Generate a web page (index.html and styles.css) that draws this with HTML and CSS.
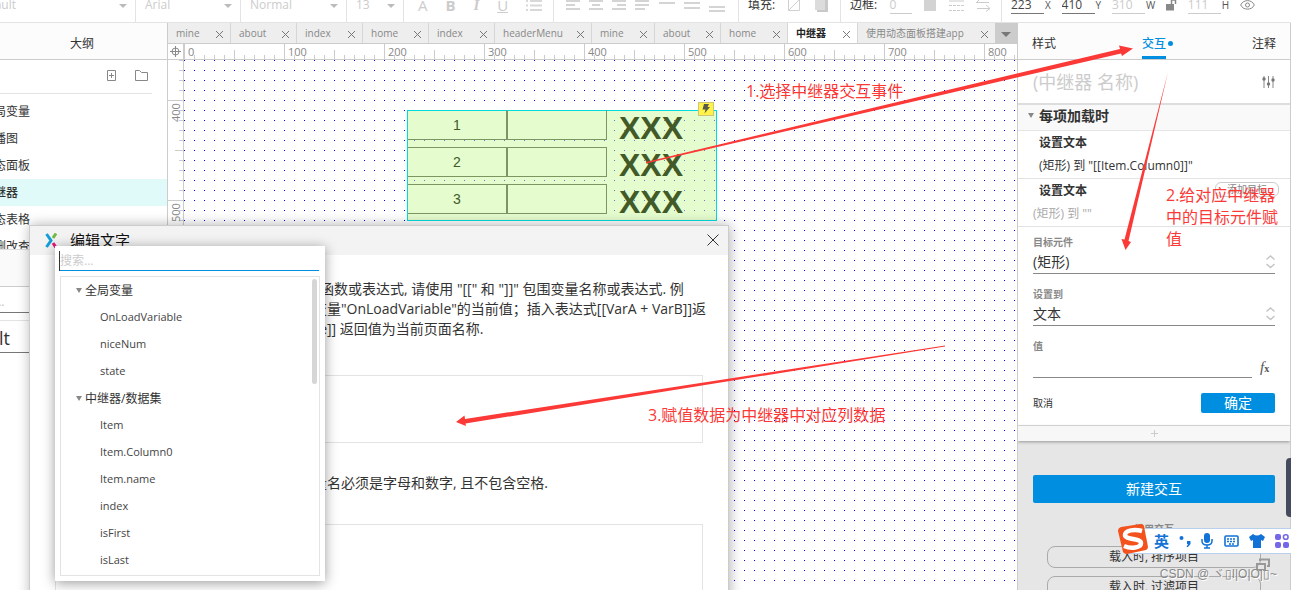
FILE: index.html
```html
<!DOCTYPE html>
<html lang="zh-CN">
<head>
<meta charset="utf-8">
<title>中继器</title>
<link rel="stylesheet" href="styles.css">
</head>
<body>
<div class="app">
  <header class="toolbar">
    <div class="group g-style"><span class="cut cut-style">Default</span><i class="caret"></i></div>
    <div class="group g-font"><span>Arial</span><i class="caret"></i></div>
    <div class="group g-weight"><span>Normal</span><i class="caret"></i></div>
    <div class="group g-size"><span>13</span><i class="caret"></i></div>
    <div class="group g-format">
      <span class="glyph">A</span><b class="glyph">B</b><i class="glyph serif">I</i><u class="glyph">U</u>
      <svg width="17" height="12" viewBox="0 0 17 12"><path d="M0 1h2M0 5.500h2M0 10h2M4 1h12M4 5.500h12M4 10h12" stroke="#d8d8d8" stroke-width="2"/></svg>
    </div>
    <div class="group g-align">
      <svg width="14" height="12"><path d="M0 1h14M0 5h9M0 9h14" stroke="#d4d4d4" stroke-width="2"/></svg>
      <svg width="14" height="12"><path d="M0 1h14M3 5h8M0 9h14" stroke="#d4d4d4" stroke-width="2"/></svg>
      <svg width="14" height="12"><path d="M0 1h14M5 5h9M0 9h14" stroke="#d4d4d4" stroke-width="2"/></svg>
      <svg width="14" height="12"><path d="M0 1h14M0 5h14M0 9h10" stroke="#d4d4d4" stroke-width="2"/></svg>
      <svg width="16" height="12"><path d="M0 3h16" stroke="#d4d4d4" stroke-width="2"/></svg>
      <svg width="16" height="12"><path d="M0 3h16M0 8h16" stroke="#d4d4d4" stroke-width="2"/></svg>
      <svg width="16" height="12"><path d="M0 7h16M0 11h16" stroke="#d4d4d4" stroke-width="2"/></svg>
    </div>
    <div class="group g-fill">
      <span class="dark">填充:</span>
      <svg width="13" height="12"><path d="M.5 0v10.500h11V0M1 10L11 0" fill="none" stroke="#d0d0d0"/></svg>
      <svg width="14" height="12"><path d="M3 0h11v12H3z" fill="#c9c9c9"/><path d="M1 0h10v10H1z" fill="#dcdcdc"/></svg>
    </div>
    <div class="group g-border">
      <span class="dark">边框:</span><span class="field">0</span>
      <svg width="12" height="12"><path d="M0 0h12v11H0z" fill="#d3d3d3"/></svg>
      <svg width="15" height="12"><path d="M0 1h15" stroke="#ccc"/><path d="M0 5.500h15M0 10.500h15" stroke="#ccc" stroke-dasharray="3 1"/></svg>
      <svg width="14" height="12"><path d="M0 2.500h13M4 -1L.5 2.500M1 8.500h13M10 5l4 3.500-4 3" stroke="#ccc" fill="none"/></svg>
    </div>
    <div class="group g-place">
      <label class="dim"><input class="field on" value="223">X</label>
      <label class="dim"><input class="field on" value="410">Y</label>
      <label class="dim"><input class="field" value="310">W</label>
      <svg width="11" height="12"><path d="M0 4h8v6.500H0z" fill="#888"/><path d="M5.500 5V0h4v4" fill="none" stroke="#888" stroke-width="1.500"/></svg>
      <label class="dim"><input class="field" value="111">H</label>
      <svg width="15" height="11" viewBox="0 0 15 11"><path d="M.7 5C3-.8 12-.8 14.300 5 12 10.500 3 10.500.7 5z" fill="none" stroke="#888"/><circle cx="7.500" cy="5" r="2" fill="none" stroke="#888"/></svg>
    </div>
  </header>

  <div class="main">
    <aside class="left">
      <h2 class="panel-title">大纲</h2>
      <div class="outline-tools">
        <svg width="10" height="12"><path d="M.5.5h8v10h-8zM4.500 3v5M2 5.500h5" fill="none" stroke="#888"/></svg>
        <svg width="14" height="12"><path d="M.5.5h4l2 2h6v8H.5z" fill="none" stroke="#888"/></svg>
      </div>
      <ul class="pages">
        <li>全局变量</li><li>轮播图</li><li>动态面板</li><li class="selected">中继器</li><li>动态表格</li><li>增删改查</li>
      </ul>
      <div class="masters"></div>
      <div class="lib-search">...</div>
      <div class="lib-name"><span class="cut cut-lib">Default</span></div>
    </aside>

    <section class="center">
      <nav class="tabs">
        <div class="tab">mine<button class="x" aria-label="关闭"></button></div>
        <div class="tab">about<button class="x" aria-label="关闭"></button></div>
        <div class="tab">index<button class="x" aria-label="关闭"></button></div>
        <div class="tab">home<button class="x" aria-label="关闭"></button></div>
        <div class="tab">index<button class="x" aria-label="关闭"></button></div>
        <div class="tab">headerMenu<button class="x" aria-label="关闭"></button></div>
        <div class="tab">mine<button class="x" aria-label="关闭"></button></div>
        <div class="tab">about<button class="x" aria-label="关闭"></button></div>
        <div class="tab">home<button class="x" aria-label="关闭"></button></div>
        <div class="tab active">中继器<button class="x" aria-label="关闭"></button></div>
        <div class="tab last">使用动态面板搭建app<button class="x" aria-label="关闭"></button></div>
        <button class="tab-menu" aria-label="所有页面"><i class="caret"></i></button>
      </nav>
      <div class="workspace">
        <div class="corner"><svg width="11" height="11"><circle cx="5.500" cy="5.500" r="3.500" fill="none" stroke="#888"/><path d="M5.500 0v11M0 5.500h11" stroke="#888"/></svg></div>
        <div class="ruler-h"><span>0</span><span>100</span><span>200</span><span>300</span><span>400</span><span>500</span><span>600</span><span>700</span><span>800</span></div>
        <div class="ruler-v"><span>400</span><span>500</span></div>
        <div class="canvas">
          <div class="repeater">
            <div class="row"><span class="cell">1</span><span class="cell"></span><b class="big">XXX</b></div>
            <div class="row"><span class="cell">2</span><span class="cell"></span><b class="big">XXX</b></div>
            <div class="row"><span class="cell">3</span><span class="cell"></span><b class="big">XXX</b></div>
            <div class="bolt"><svg width="8" height="10"><path d="M2 0h5L5.500 3H8L2.500 9.500 3.500 5.500H.5z" fill="#5a5a4a"/></svg></div>
          </div>
        </div>
      </div>
    </section>

    <aside class="right">
      <nav class="modes"><a href="#">样式</a><a href="#" class="current">交互</a><a href="#">注释</a></nav>
      <div class="name-row">
        <input class="name" aria-label="名称" placeholder="(中继器 名称)">
        <svg width="13" height="13"><path d="M2 1v12M6.500 1v12M11 1v12" stroke="#888"/><circle cx="2" cy="4" r="1.700" fill="#777"/><circle cx="6.500" cy="9" r="1.700" fill="#777"/><circle cx="11" cy="5" r="1.700" fill="#777"/></svg>
      </div>
      <h3 class="event"><i class="tri"></i>每项加载时</h3>
      <div class="action"><b>设置文本</b><span>(矩形) 到 "[[Item.Column0]]"</span></div>
      <div class="action pending"><b>设置文本</b><button class="add-target">添加目标</button><span>(矩形) 到 ""</span></div>
      <form class="form">
        <label for="target">目标元件</label>
        <div class="pick"><select id="target"><option>(矩形)</option></select><svg width="9" height="14"><path d="M.5 4.500L4.500 1l4 3.500M.5 9l4 3.500L8.500 9" fill="none" stroke="#c4c4c4" stroke-width="1.400"/></svg></div>
        <label for="setto">设置到</label>
        <div class="pick"><select id="setto"><option>文本</option></select><svg width="9" height="14"><path d="M.5 4.500L4.500 1l4 3.500M.5 9l4 3.500L8.500 9" fill="none" stroke="#c4c4c4" stroke-width="1.400"/></svg></div>
        <label for="val">值</label>
        <div class="value"><input id="val"><button type="button" class="fx"><i>f</i><small>x</small></button></div>
        <div class="confirm"><a href="#">取消</a><button type="button" class="primary ok">确定</button></div>
      </form>
      <button class="more" aria-label="添加"><svg width="9" height="9"><path d="M4.500 1v7M1 4.500h7" stroke="#ccc"/></svg></button>
      <div class="bottom">
        <button class="primary new">新建交互</button>
        <p class="common">常用交互</p>
        <button class="pill">载入时, 排序项目</button>
        <button class="pill">载入时, 过滤项目</button>
      </div>
    </aside>
  </div>

  <section class="dialog">
    <header class="dialog-bar">
      <svg width="13" height="15" viewBox="0 0 13 15"><path d="M1.500 1L6 7.500 1.500 14" fill="none" stroke="#159fd8" stroke-width="3"/><path d="M8 5l3-4.500" stroke="#74b943" stroke-width="3"/><path d="M8 10l3 4.500" stroke="#e5177b" stroke-width="3"/></svg>
      <h2>编辑文字</h2>
      <button class="close" aria-label="关闭"><svg width="12" height="12"><path d="M.5.5l11 11M11.500.5l-11 11" stroke="#333"/></svg></button>
    </header>
    <div class="dialog-body">
      <p class="help">
        <span class="line"><span class="lead l1">在下方编辑文本, 要插入变量、</span>函数或表达式, 请使用 "[[" 和 "]]" 包围变量名称或表达式. 例</span>
        <span class="line"><span class="lead l2">如：插入</span>变量"OnLoadVariable"的当前值；插入表达式[[VarA + VarB]]返</span>
        <span class="line"><span class="lead l3">插入 [[PageName</span>]] 返回值为当前页面名称.</span>
      </p>
      <textarea class="editor" aria-label="文本"></textarea>
      <p class="note"><span class="line"><span class="lead l3">局部变量</span>名必须是字母和数字, 且不包含空格.</span></p>
      <div class="locals"></div>
    </div>
    <div class="popup">
      <input class="search" aria-label="搜索" placeholder="搜索...">
      <div class="vars">
        <ul>
          <li class="cat"><i class="tri"></i>全局变量</li>
          <li>OnLoadVariable</li><li>niceNum</li><li>state</li>
          <li class="cat"><i class="tri"></i>中继器/数据集</li>
          <li>Item</li><li>Item.Column0</li><li>Item.name</li><li>index</li><li>isFirst</li><li>isLast</li>
        </ul>
        <i class="thumb"></i>
      </div>
    </div>
  </section>

  <div class="note-text n1">1.选择中继器交互事件</div>
  <div class="note-text n2">2.给对应中继器中的目标元件赋值</div>
  <div class="note-text n3">3.赋值数据为中继器中对应列数据</div>
  <svg class="arrows" width="1291" height="590" fill="#fb3a38">
    <path d="M646 162L1120 49 1119 45.500 1133 48.500 1122 56 1121 53.500 646 163.500z"/>
    <path d="M1168 72L1124.500 239.500 1121.500 239 1125.500 250 1131 242 1128.500 241z"/>
    <path d="M945 345.500L465 419 464.500 415.500 456 422 466 426 465.500 423.500 945 346.500z"/>
  </svg>

  <div class="dock"></div>
  <div class="ime">
    <svg class="sogou" width="32" height="32" viewBox="0 0 32 32"><path d="M4 4L24 1q2 0 3 2l4 21q0 2-2 3L10 31q-3 0-4-2L1 8q0-3 3-4z" fill="#f4521c"/><path d="M25 8C18 6 8 7 8 12s16 3 16 8-10 6-17 3" fill="none" stroke="#fff" stroke-width="4.500"/></svg>
    <b>英</b>
    <svg width="12" height="14"><circle cx="2.500" cy="4" r="2" fill="#1272d6"/><path d="M8 7h3.500v3L9 13H7.500L9 10H8z" fill="#1272d6"/></svg>
    <svg width="12" height="16"><rect x="3" y="0" width="6" height="10" rx="3" fill="#1272d6"/><path d="M1 6v2q0 4 5 4t5-4V6M6 12v3M3 15h6" fill="none" stroke="#1272d6" stroke-width="1.500"/></svg>
    <svg width="15" height="12"><rect x="1" y="1" width="13" height="10" rx="1" fill="none" stroke="#1272d6" stroke-width="1.600"/><path d="M3 4h9M3 6.500h9M5 9h5" stroke="#1272d6" stroke-width="1.500" stroke-dasharray="2 1"/></svg>
    <svg width="16" height="14"><path d="M0 3l4-3q4 3 8 0l4 3-2 4-2-1v8H4V6L2 7z" fill="#1272d6"/></svg>
    <svg width="14" height="14"><rect width="6" height="6" rx="2" fill="#7467e8"/><rect x="8.500" y=".8" width="4.500" height="4.500" rx="2" fill="none" stroke="#7467e8" stroke-width="1.600"/><rect y="8" width="6" height="6" rx="2" fill="#7467e8"/><rect x="8" y="8" width="6" height="6" rx="2" fill="#7467e8"/></svg>
  </div>
  <svg class="restore" width="14" height="13"><path d="M1 6h8v6H1zM4 3V1.500h9V8h-2" fill="none" stroke="#999" stroke-width="2"/></svg>
  <div class="watermark">CSDN @ ヾ▯I|O|O|▯~</div>
</div>
</body>
</html>
```

FILE: styles.css
```css
* { box-sizing: border-box; }
body { margin: 0; background: #fff; color: #333; font: 12px/16px "Open Sans", "Noto Sans CJK SC", sans-serif; }
button, input, select, textarea { font: inherit; color: inherit; margin: 0; padding: 0; border: 0; background: none; outline: 0; }
ul, h2, h3, p { margin: 0; padding: 0; list-style: none; font-weight: normal; }
a { color: inherit; text-decoration: none; }
svg { flex: none; display: block; }
.app { position: relative; height: 100vh; overflow: hidden; display: flex; flex-direction: column; }

.toolbar { display: flex; flex: none; height: 23px; border-bottom: 1px solid #e3e3e3; color: #ccc; line-height: 10px; white-space: nowrap; }
.group { display: flex; flex: none; border-right: 1px solid #e3e3e3; align-items: flex-start; justify-content: space-between; padding: 0 8px 0 9px; }
.caret { border: 4px solid transparent; border-top-color: #bbb; border-bottom: 0; margin-top: 4px; }
.cut { display: flex; justify-content: flex-end; overflow: hidden; }
.cut-style { width: 16px; height: 14px; }
.g-style { width: 136px; padding-left: 0; }
.g-font { width: 105px; }
.g-weight { width: 106px; }
.g-size { width: 57px; }
.g-format { width: 150px; padding: 0 10px 0 14px; }
.glyph { font-size: 15px; }
.serif { font-family: "Liberation Serif", serif; font-weight: bold; }
.g-align { width: 185px; padding: 0 13px 0 12px; }
.g-fill { width: 102px; padding: 0 12px 0 9px; }
.g-border { width: 161px; padding: 0 11px 0 9px; }
.dark { color: #333; }
.g-place { flex: 1; border: 0; padding: 0 36px 0 9px; }
.dim { display: flex; gap: 1px; color: #555; font-size: 10px; }
.dim .field { font-size: 12px; }
.field { width: 33px; height: 14px; line-height: 10px; padding-bottom: 4px; border-bottom: 1px solid #ccc; color: #ccc; }
.g-border .field { width: 22px; }
.field.on { color: #444; border-color: #777; }

.main { flex: 1; min-height: 0; display: grid; grid-template-columns: 167px minmax(0, 1fr) 274px; }
.left { display: flex; flex-direction: column; min-height: 0; overflow: hidden; }
.panel-title { flex: none; height: 37px; background: #fcfcfc; border-bottom: 1px solid #ccc; text-align: center; font-size: 12px; line-height: 41px; padding-right: 3px; }
.outline-tools { flex: none; display: flex; justify-content: flex-end; align-items: center; gap: 18px; height: 34px; margin-right: 15px; padding: 0 3px 2px 0; border-bottom: 1px solid #e3e3e3; }
.pages { flex: none; height: 155px; padding-top: 4px; overflow: hidden; white-space: nowrap; }
.pages li { height: 27px; line-height: 27px; text-indent: -18px; }
.pages .selected { background: #e0fafa; font-weight: 500; }
.masters { flex: none; height: 38px; background: #fafafa; border-top: 1px solid #ddd; border-bottom: 1px solid #ccc; }
.lib-search { flex: none; height: 26px; border-bottom: 1px solid #777; color: #bbb; line-height: 30px; text-indent: -5px; }
.lib-name { flex: none; margin-top: 7px; height: 33px; border-top: 1px solid #e3e3e3; border-bottom: 1px solid #777; font-size: 18px; line-height: 34px; }
.cut-lib { width: 10px; }

.center { display: flex; flex-direction: column; min-width: 0; border-left: 1px solid #ccc; }
.tabs { flex: none; display: grid; height: 21px; grid-template-columns: 63px 66px 66px 66px 66px 97px 63px 66px 67px 70px 1fr 22px; background: #eee; border-bottom: 1px solid #ccc; color: #888; font-size: 10px; line-height: 19px; white-space: nowrap; }
.tab { display: flex; align-items: center; justify-content: space-between; padding: 0 7px 0 8px; border-right: 1px solid #d6d6d6; }
.tab.active { background: #fff; color: #222; font-weight: bold; }
.tab.last { border: 0; }
.x { width: 7px; height: 7px; margin-top: 2px; background: linear-gradient(45deg, transparent 45%, #777 45% 55%, transparent 55%), linear-gradient(-45deg, transparent 45%, #777 45% 55%, transparent 55%); }
.tab-menu { background: #ccc; display: flex; justify-content: center; align-items: center; }
.tab-menu .caret { border-width: 5px 5px 0; border-top-color: #777; margin: 2px 0 0; }
.workspace { flex: 1; min-height: 0; display: grid; grid-template: 16px 1fr / 16px 1fr; }
.corner { display: grid; place-items: center; border-right: 1px solid #ccc; border-bottom: 1px solid #ccc; }
.ruler-h { display: flex; overflow: hidden; border-bottom: 1px solid #ccc; color: #888; font-size: 11px; line-height: 15px;
  background: repeating-linear-gradient(90deg, #ccc 0 1px, transparent 1px 100px), repeating-linear-gradient(90deg, transparent 0 50px, #ccc 50px 51px, transparent 51px 100px) 0 6px no-repeat, repeating-linear-gradient(90deg, #ccc 0 1px, transparent 1px 10px) 0 11px no-repeat; }
.ruler-h span { flex: 0 0 100px; padding-left: 4px; }
.ruler-v { overflow: hidden; border-right: 1px solid #ccc; color: #888; font-size: 11px; line-height: 15px; padding-top: 40px;
  background: repeating-linear-gradient(transparent 0 40px, #ccc 40px 41px, transparent 41px 100px), repeating-linear-gradient(transparent 0 90px, #ccc 90px 91px, transparent 91px 100px) 7px 0 no-repeat, repeating-linear-gradient(#ccc 0 1px, transparent 1px 10px) 11px 0 no-repeat; }
.ruler-v span { display: block; height: 100px; width: 15px; writing-mode: vertical-rl; transform: rotate(180deg); text-align: right; padding-bottom: 3px; }
.canvas { position: relative; background: conic-gradient(from 270deg at 1px 1px, #00f 90deg, transparent 0) 0 0 / 10px 10px; }
.repeater { position: absolute; left: 223px; top: 50px; width: 310px; height: 111px; background: rgba(203, 250, 158, .5); border: 1px solid #00dcdc; display: grid; grid-auto-rows: 30px; row-gap: 7px; }
.row { display: grid; grid-template: 30px / 99px 100px 1fr; margin-top: -1px; height: 30px; }
.cell { background: #e5fccf; border: 1px solid #7c9663; text-align: center; font: 14px/29px "Liberation Sans", sans-serif; color: #425a28; }
.cell:first-child { border-left: 0; }
.row:first-child .cell { border-top-color: transparent; background-clip: padding-box; }
.big { color: #425a28; font: bold 32px/36px "Liberation Sans", sans-serif; padding-left: 12px; }
.bolt { position: absolute; right: 2px; top: -9px; width: 16px; height: 14px; background: #fff34a; border: 1px solid #cfc57a; display: grid; place-items: center; }

.right { border: solid #ccc; border-width: 0 1px; background: #e6e6e6; display: flex; flex-direction: column; min-height: 0; overflow: hidden; }
.modes { flex: none; height: 37px; background: #fcfcfc; border-bottom: 1px solid #ccc; display: flex; justify-content: space-between; padding: 3px 14px 0; line-height: 35px; }
.current { color: #008fe0; position: relative; border-bottom: 3px solid #008fe0; height: 33px; font-weight: 500; }
.current::after { content: ""; position: absolute; right: -7px; top: 15px; width: 5px; height: 5px; border-radius: 50%; background: #008fe0; }
.name-row { flex: none; height: 45px; background: #fff; border-bottom: 2px solid #ddd; display: flex; align-items: center; padding: 0 15px; }
.name { flex: 1; min-width: 0; font-size: 18px; height: 28px; }
.name::placeholder { color: #ccc; }
.event { flex: none; display: flex; align-items: center; height: 26px; background: #f9f9f9; border-bottom: 1px solid #e6e6e6; padding: 0 0 4px 10px; gap: 5px; font-size: 14px; font-weight: bold; line-height: 20px; }
.tri { border: 3px solid transparent; border-top: 5px solid #888; border-bottom: 0; }
.action { flex: none; position: relative; height: 48px; background: #fff; border-bottom: 1px solid #e3e3e3; padding-left: 21px; display: flex; flex-direction: column; line-height: 23px; }
.action > span { font-size: 12px; }
.pending > span { color: #aaa; margin-left: -6px; }
.add-target { position: absolute; right: 11px; top: 3px; width: 64px; height: 15px; border: 1px solid #ccc; border-radius: 6px; color: #888; font-size: 10px; line-height: 13px; }
.form { flex: none; height: 199px; background: #fff; border-bottom: 1px solid #ddd; padding: 7px 15px 0; }
.form > label { display: block; font-size: 10px; font-weight: bold; color: #888; line-height: 16px; }
.pick { display: flex; align-items: center; height: 24px; border-bottom: 1px solid #888; margin-bottom: 12px; }
.pick select { flex: 1; appearance: none; font-size: 14px; height: 20px; line-height: 20px; }
.value { display: flex; height: 24px; align-items: flex-end; gap: 8px; }
.value input { flex: 1; min-width: 0; height: 24px; border-bottom: 1px solid #888; }
.fx { width: 15px; height: 20px; text-align: left; font: 15px/16px "Liberation Serif", serif; color: #555; white-space: nowrap; }
.fx small { font-size: 10px; font-weight: bold; }
.confirm { display: flex; justify-content: space-between; align-items: center; padding-top: 15px; font-size: 10px; }
.primary { background: #008fe0; color: #fff; font-size: 14px; border-radius: 2px; }
.ok { width: 74px; height: 20px; line-height: 20px; }
.more { flex: none; height: 15px; background: #f7f7f7; display: grid; place-items: center; box-shadow: 0 1px 3px rgba(0, 0, 0, .35); }
.bottom { padding: 34px 15px 0; display: flex; flex-direction: column; }
.new { height: 28px; flex: none; }
.common { text-align: center; font-size: 10px; color: #888; font-weight: bold; line-height: 16px; margin: 18px 0 9px; }
.pill { flex: none; height: 22px; margin: 0 14px 8px; border: 1px solid #aaa; border-radius: 8px; line-height: 20px; }

.dialog { position: absolute; left: 29px; top: 225px; width: 700px; bottom: -30px; background: #fff; border: 1px solid #ccc; box-shadow: 1px 0 12px rgba(0, 0, 0, .3); }
.dialog-bar { height: 29px; background: #f3f3f3; display: flex; align-items: center; padding: 0 9px 1px 15px; gap: 12px; }
.dialog-bar h2 { font-size: 15px; line-height: 20px; color: #111; flex: 1; }
.close { display: flex; }
.dialog-body { padding: 24px 25px 0; font-size: 14px; }
.line { display: flex; white-space: nowrap; height: 20px; line-height: 20px; }
.lead { display: flex; justify-content: flex-end; overflow: hidden; flex: none; }
.l1 { width: 265px; }
.l2 { width: 258px; }
.l3 { width: 272px; }
.editor { display: block; width: 100%; height: 68px; border: 1px solid #e3e3e3; margin: 36px 0 30px; resize: none; }
.locals { height: 100px; margin-top: 31px; border: 1px solid #e3e3e3; }
.popup { position: absolute; left: 25px; top: 20px; width: 270px; height: 335px; background: #fff; box-shadow: 0 2px 12px rgba(0, 0, 0, .4); padding: 5px; }
.search { display: block; width: 259px; height: 20px; border-bottom: 1px solid #008fe0; box-shadow: -1px 0 #333; }
.search::placeholder { color: #ccc; }
.vars { position: relative; height: 300px; margin-top: 5px; border: 1px solid #e3e3e3; }
.vars li { height: 27px; line-height: 26px; padding-left: 39px; font-size: 11px; color: #444; }
.vars .cat { display: flex; align-items: center; gap: 3px; padding-left: 15px; font-size: 12px; color: #333; }
.thumb { position: absolute; right: 2px; top: 2px; width: 5px; height: 105px; border-radius: 3px; background: #d6d6d6; }

.note-text { position: absolute; font-size: 16px; line-height: 22px; color: #fb3a38; }
.n1 { left: 746px; top: 80px; }
.n2 { left: 1166px; top: 184px; width: 116px; }
.n3 { left: 648px; top: 404px; }
.arrows { position: absolute; left: 0; top: 0; pointer-events: none; }
.dock { position: absolute; right: 0; top: 458px; width: 5px; height: 59px; background: #444b5c; border-radius: 4px 0 0 4px; }
.ime { position: absolute; right: 0; top: 528px; width: 166px; height: 26px; background: #fff; border: 1px solid #b8d0ec; border-width: 1px 0; display: flex; align-items: center; justify-content: space-between; padding: 0 2px 0 29px; color: #1272d6; font-size: 15px; }
.sogou { position: absolute; left: -8px; top: -6px; }
.restore { position: absolute; left: 1256px; top: 558px; }
.watermark { position: absolute; right: 14px; top: 566px; font: 12px/16px "Liberation Sans", "Noto Sans CJK SC", sans-serif; color: #888; text-shadow: 1px 1px #fff; white-space: nowrap; }
```
